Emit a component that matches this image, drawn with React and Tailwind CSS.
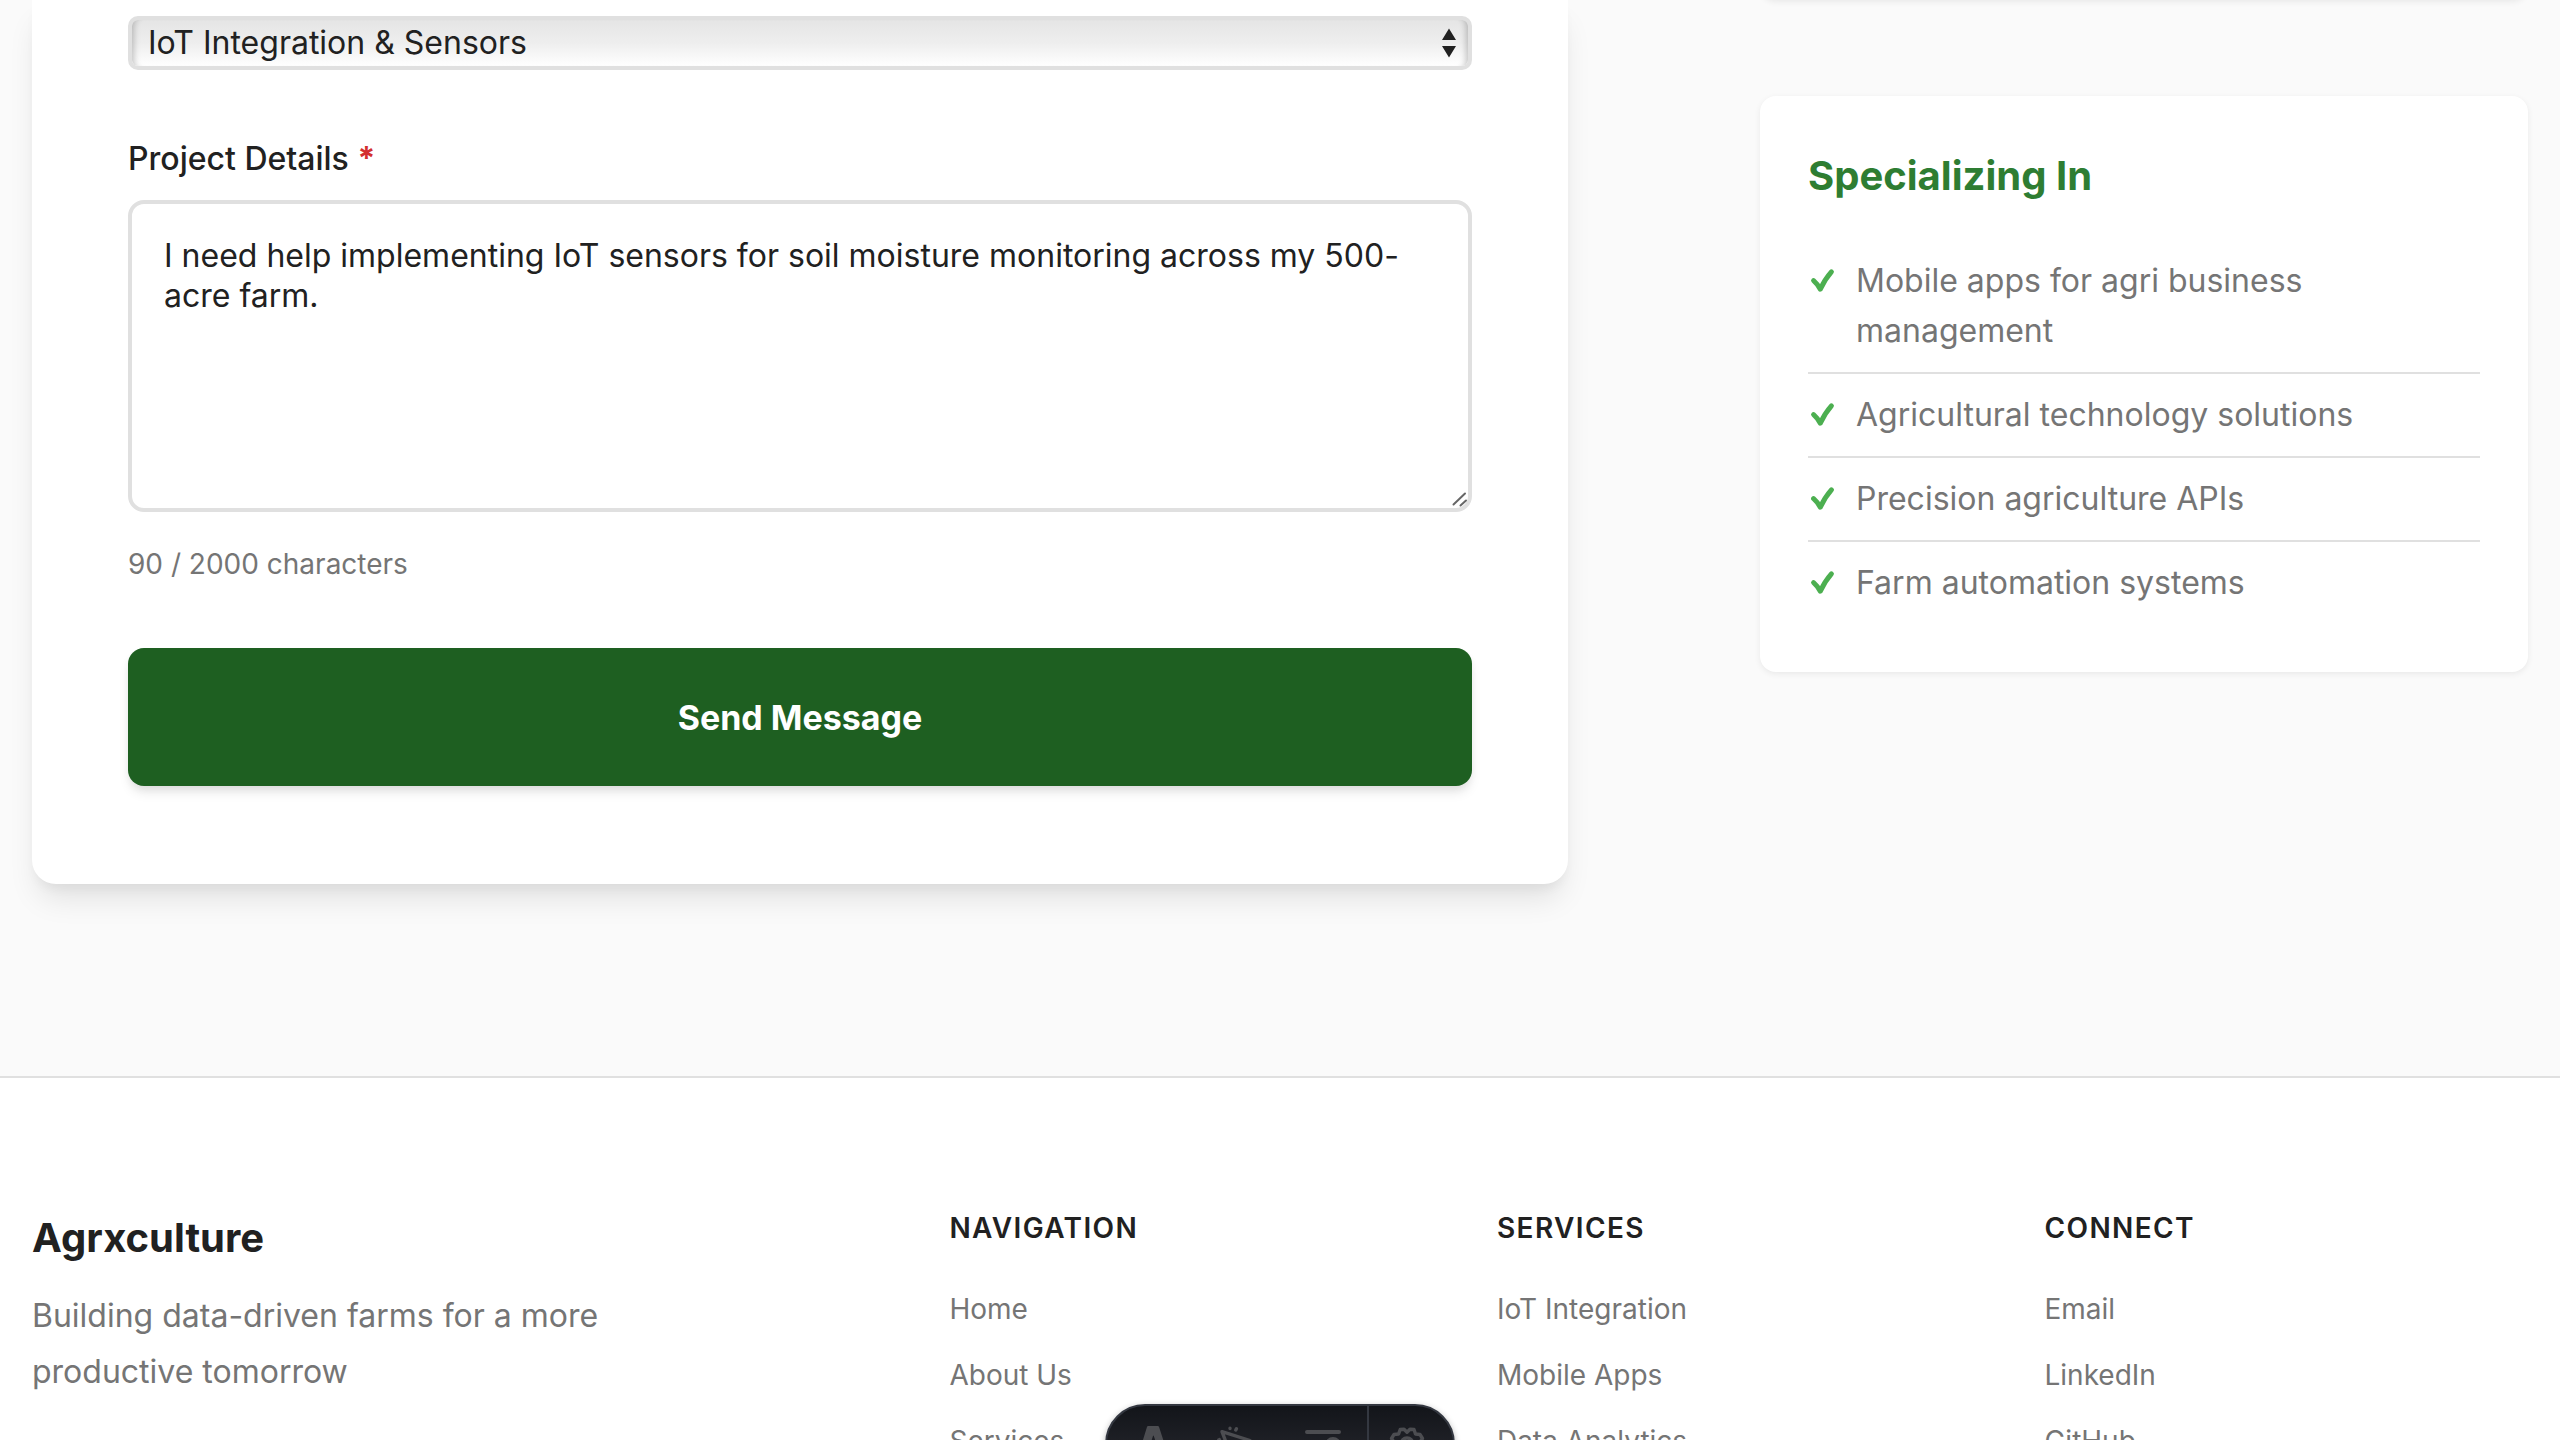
import React, { useState } from "react";

const specialties = [
  "Mobile apps for agri business management",
  "Agricultural technology solutions",
  "Precision agriculture APIs",
  "Farm automation systems",
];

const footerColumns = [
  { title: "Navigation", links: ["Home", "About Us", "Services"] },
  { title: "Services", links: ["IoT Integration", "Mobile Apps", "Data Analytics"] },
  { title: "Connect", links: ["Email", "LinkedIn", "GitHub"] },
];

const serviceOptions = [
  "IoT Integration & Sensors",
  "Mobile Apps",
  "Data Analytics",
];

function CheckIcon() {
  return (
    <svg
      viewBox="0 0 32 50"
      className="h-[50px] w-8 shrink-0"
      fill="none"
      stroke="#4caf50"
      strokeWidth="5"
      strokeLinecap="round"
      strokeLinejoin="round"
      aria-hidden="true"
    >
      <path d="M5.6 24.6Q9 27.4 12.3 33.2Q16.8 23.2 23.4 15.8" />
    </svg>
  );
}

function ContactForm() {
  const [service, setService] = useState(serviceOptions[0]);
  const [details, setDetails] = useState(
    "I need help implementing IoT sensors for soil moisture monitoring across my 500-acre farm."
  );

  return (
    <form
      onSubmit={(e) => e.preventDefault()}
      className="rounded-b-3xl bg-white px-24 pt-4 pb-[98px] shadow-[0_20px_30px_-6px_rgba(0,0,0,0.1),0_8px_12px_-4px_rgba(0,0,0,0.05)]"
    >
      <div className="relative">
        <select
          aria-label="Service"
          value={service}
          onChange={(e) => setService(e.target.value)}
          className="block h-[54px] w-full appearance-none rounded-[10px] border-4 border-[#e0e0e0] bg-linear-to-b from-[#e5e5e5] via-[#eeeeee] to-white px-4 text-[32px] leading-[44px] text-[#212121] shadow-[inset_8px_0_6px_-6px_rgba(0,0,0,0.22),inset_-8px_0_6px_-6px_rgba(0,0,0,0.22)]"
        >
          {serviceOptions.map((o) => (
            <option key={o}>{o}</option>
          ))}
        </select>
        <svg
          viewBox="0 0 14 30"
          className="pointer-events-none absolute top-3 right-4 h-[30px] w-[14px]"
          fill="#212121"
          aria-hidden="true"
        >
          <path d="M7 0.5L14 12H0ZM7 29.5L14 18H0Z" />
        </svg>
      </div>

      <label
        htmlFor="details"
        className="mt-16 mb-4 block text-[32px] leading-[50px] font-medium text-[#212121]"
      >
        Project Details <span className="font-bold text-[#d32f2f]">*</span>
      </label>
      <div className="relative">
        <textarea
          id="details"
          maxLength={2000}
          value={details}
          onChange={(e) => setDetails(e.target.value)}
          className="block h-[312px] w-full resize-none rounded-2xl border-4 border-[#e0e0e0] bg-white p-8 text-[32px] leading-10 text-[#212121]"
        />
        <svg
          viewBox="0 0 16 16"
          className="pointer-events-none absolute right-1 bottom-1 h-4 w-4"
          fill="none"
          stroke="#666"
          strokeWidth="2"
          strokeLinecap="round"
          aria-hidden="true"
        >
          <path d="M1.5 12.5L13 1.5M8.5 13.5L14 8.5" />
        </svg>
      </div>
      <p className="mt-7 text-[28px] leading-12 text-[#757575]">
        {details.length} / 2000 characters
      </p>

      <button
        type="submit"
        className="mt-[60px] h-[138px] w-full rounded-2xl bg-[#1e5f21] text-[34px] font-bold text-white shadow-[0_8px_12px_-2px_rgba(0,0,0,0.1),0_4px_8px_-2px_rgba(0,0,0,0.06)]"
      >
        Send Message
      </button>
    </form>
  );
}

function Sidebar() {
  return (
    <aside>
      <div className="-mt-24 mb-24 h-24 rounded-2xl bg-white shadow-[0_2px_6px_rgba(0,0,0,0.07)]" />
      <section className="rounded-2xl bg-white p-12 shadow-[0_2px_6px_rgba(0,0,0,0.07)]">
        <h3 className="mb-8 text-[40px] leading-16 font-bold text-[#2e7d32]">
          Specializing In
        </h3>
        <ul>
          {specialties.map((s) => (
            <li
              key={s}
              className="flex gap-4 border-b-2 border-[#e0e0e0] py-4 text-[32px] leading-[50px] text-[#757575] last:border-b-0"
            >
              <CheckIcon />
              <span>{s}</span>
            </li>
          ))}
        </ul>
      </section>
    </aside>
  );
}

function Footer() {
  return (
    <footer className="border-t-2 border-[#e0e0e0] bg-white px-8 pt-32 pb-32">
      <div className="grid grid-cols-[1.765fr_1fr_1fr_1fr] gap-16">
        <div>
          <h3 className="text-[40px] leading-16 font-bold text-[#212121]">Agrxculture</h3>
          <p className="mt-[18px] max-w-[600px] text-[32px] leading-14 text-[#757575]">
            Building data-driven farms for a more productive tomorrow
          </p>
        </div>
        {footerColumns.map((col) => (
          <nav key={col.title} aria-label={col.title}>
            <h4 className="mb-[34px] text-[28px] leading-11 font-semibold tracking-wider text-[#212121] uppercase">
              {col.title}
            </h4>
            <ul className="flex flex-col gap-4 text-[28px] leading-[50px] text-[#757575]">
              {col.links.map((l) => (
                <li key={l}>
                  <a href="#">{l}</a>
                </li>
              ))}
            </ul>
          </nav>
        ))}
      </div>
    </footer>
  );
}

function DevToolbar() {
  const item = "flex w-[84px] items-center justify-center";
  return (
    <div
      role="toolbar"
      aria-label="Developer tools"
      className="fixed -bottom-11 left-1/2 flex h-20 -translate-x-1/2 overflow-hidden rounded-full border-2 border-[#343841] bg-linear-to-b from-[#13151a] to-[#2b2c33] text-[#4c4d51] shadow-[0_2px_6px_rgba(0,0,0,0.3)]"
    >
      <div className="flex px-1">
        <button type="button" aria-label="Menu" className={item}>
          <svg viewBox="0 0 40 40" className="h-10 w-10" fill="currentColor" aria-hidden="true">
            <path d="M14.1 2.6Q14.5 2 15.3 2H24.7Q25.5 2 25.9 2.6L34.5 29Q30 27 25.5 26.2L20.9 12.2Q20.4 10.8 19.9 12.2L15.4 26.2Q10.5 27 6 29Z" />
            <path d="M12 30Q20 36 28 30Q29 36 24 38Q22 34 20 39Q13 37 12 30Z" />
          </svg>
        </button>
        <button type="button" aria-label="Inspect" className={item}>
          <svg
            viewBox="0 0 40 40"
            className="h-10 w-10"
            fill="none"
            stroke="currentColor"
            strokeWidth="3.4"
            strokeLinecap="round"
            strokeLinejoin="round"
            aria-hidden="true"
          >
            <path d="M5 7.6L33 16.5L21 22L15 34Z" />
            <path d="M13 4.2V4.6M19.4 4.8L18.8 6M1.8 16L2.4 15.6M2 22H2.4" />
          </svg>
        </button>
        <button type="button" aria-label="Audit" className={item}>
          <svg
            viewBox="0 0 40 40"
            className="h-10 w-10"
            fill="none"
            stroke="currentColor"
            strokeWidth="4"
            strokeLinecap="round"
            aria-hidden="true"
          >
            <path d="M6 8H38M6 20H18M6 32H14" />
            <circle cx="32" cy="21" r="6" />
            <path d="M35 27L38 32" />
          </svg>
        </button>
      </div>
      <button
        type="button"
        aria-label="Settings"
        className="flex w-[86px] items-center justify-center border-l-2 border-[#343841]"
      >
        <svg
          viewBox="0 0 40 40"
          className="mr-2 h-10 w-10"
          fill="none"
          stroke="currentColor"
          strokeWidth="3.4"
          strokeLinejoin="round"
          aria-hidden="true"
        >
          <path d="M13.2 5.5L17 5.2L20 8.2L23 5.2L27 5.5L28.5 10L33 10.5L35.5 14.5L33 18L36 22L34 26.5L29.5 27L28 32L23.5 33.5L20 30.5L16.5 33.5L12 32L10.5 27L6 26.5L4 22L7 18L4.5 14.5L7 10.5L11.6 10Z" />
          <circle cx="20" cy="20" r="6" />
        </svg>
      </button>
    </div>
  );
}

export default function App() {
  return (
    <div className="h-screen overflow-hidden bg-[#fafafa] font-[Inter,sans-serif]">
      <main className="grid grid-cols-[2fr_1fr] items-start gap-48 px-8 pb-48">
        <ContactForm />
        <Sidebar />
      </main>
      <Footer />
      <DevToolbar />
    </div>
  );
}
